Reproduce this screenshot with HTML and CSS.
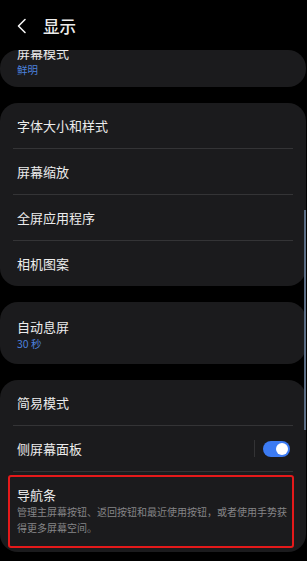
FILE: index.html
```html
<!DOCTYPE html>
<html lang="zh-CN">
<head>
    <meta charset="UTF-8">
    <title>显示</title>
    <link rel="stylesheet" href="styles.css">
</head>
<body>
    <header class="top">
        <svg class="back" width="12" height="16" viewBox="0 0 12 16">
            <polyline points="9,1.5 2.5,8 9,14.5" fill="none" stroke="#f2f2f2" stroke-width="1.6" stroke-linecap="round" stroke-linejoin="round"/>
        </svg>
        <h1 class="title">显示</h1>
    </header>
    <main class="list">
        <section class="card card-cut">
            <div class="item">
                <div class="name name-cut">屏幕模式</div>
                <div class="value">鲜明</div>
            </div>
        </section>
        <section class="card">
            <div class="row">字体大小和样式</div>
            <div class="line"></div>
            <div class="row">屏幕缩放</div>
            <div class="line"></div>
            <div class="row">全屏应用程序</div>
            <div class="line"></div>
            <div class="row">相机图案</div>
        </section>
        <section class="card">
            <div class="item">
                <div class="name">自动息屏</div>
                <div class="value">30 秒</div>
            </div>
        </section>
        <section class="card card-last">
            <div class="row">简易模式</div>
            <div class="line"></div>
            <div class="row">
                <span class="label">侧屏幕面板</span>
                <span class="sep"></span>
                <span class="switch"><span class="knob"></span></span>
            </div>
            <div class="line"></div>
            <div class="mark">
                <div class="name">导航条</div>
                <div class="desc">管理主屏幕按钮、返回按钮和最近使用按钮，或者使用手势获得更多屏幕空间。</div>
            </div>
        </section>
    </main>
    <div class="scroll"></div>
</body>
</html>
```
FILE: styles.css
```css
body {
    margin: 0;
    background: #000;
    color: #ececec;
    font-family: "Noto Sans CJK SC", "Noto Sans", sans-serif;
    width: 307px;
    height: 561px;
    overflow: hidden;
    position: relative;
}
.top {
    height: 50px;
    display: flex;
    align-items: center;
    padding-left: 16px;
    box-sizing: border-box;
}
.back {
    display: block;
    margin-top: 1px;
}
.title {
    margin: 2px 0 0 15px;
    font-size: 16.5px;
    font-weight: 500;
    line-height: 20px;
}
.list {
    display: flex;
    flex-direction: column;
    gap: 16px;
}
.card {
    background: #1b1b1d;
    border-radius: 18px;
    width: 306px;
}
.card-cut {
    height: 37px;
    overflow: hidden;
}
.item {
    padding: 15px 17px 12px;
}
.card-cut .item {
    padding-top: 0;
}
.name {
    font-size: 13px;
    line-height: 19px;
}
.name-cut {
    margin-top: -7px;
}
.value {
    font-size: 10.5px;
    line-height: 16px;
    color: #4b80dc;
}
.row {
    height: 45px;
    display: flex;
    align-items: center;
    padding: 0 16px 0 17px;
    font-size: 13px;
}
.line {
    height: 1px;
    background: #343436;
    margin: 0 13px 0 13px;
}
.label {
    flex: 1;
}
.sep {
    width: 1px;
    height: 17px;
    background: #333335;
    margin-right: 8px;
}
.switch {
    width: 27px;
    height: 16px;
    border-radius: 8px;
    background: #3c7bf3;
    display: flex;
    align-items: center;
    justify-content: flex-end;
    padding-right: 2px;
    box-sizing: border-box;
}
.knob {
    width: 12px;
    height: 12px;
    border-radius: 50%;
    background: #fff;
}
.card-last {
    padding-bottom: 4px;
}
.mark {
    margin: 3px 12px 0 8px;
    border: 2px solid #e5191a;
    border-radius: 3px;
    padding: 8px 0 10px 7px;
}
.desc {
    font-size: 10px;
    line-height: 16px;
    color: #858587;
}
.scroll {
    position: absolute;
    left: 304px;
    top: 210px;
    width: 2px;
    height: 220px;
    background: #5b6e86;
}
```
